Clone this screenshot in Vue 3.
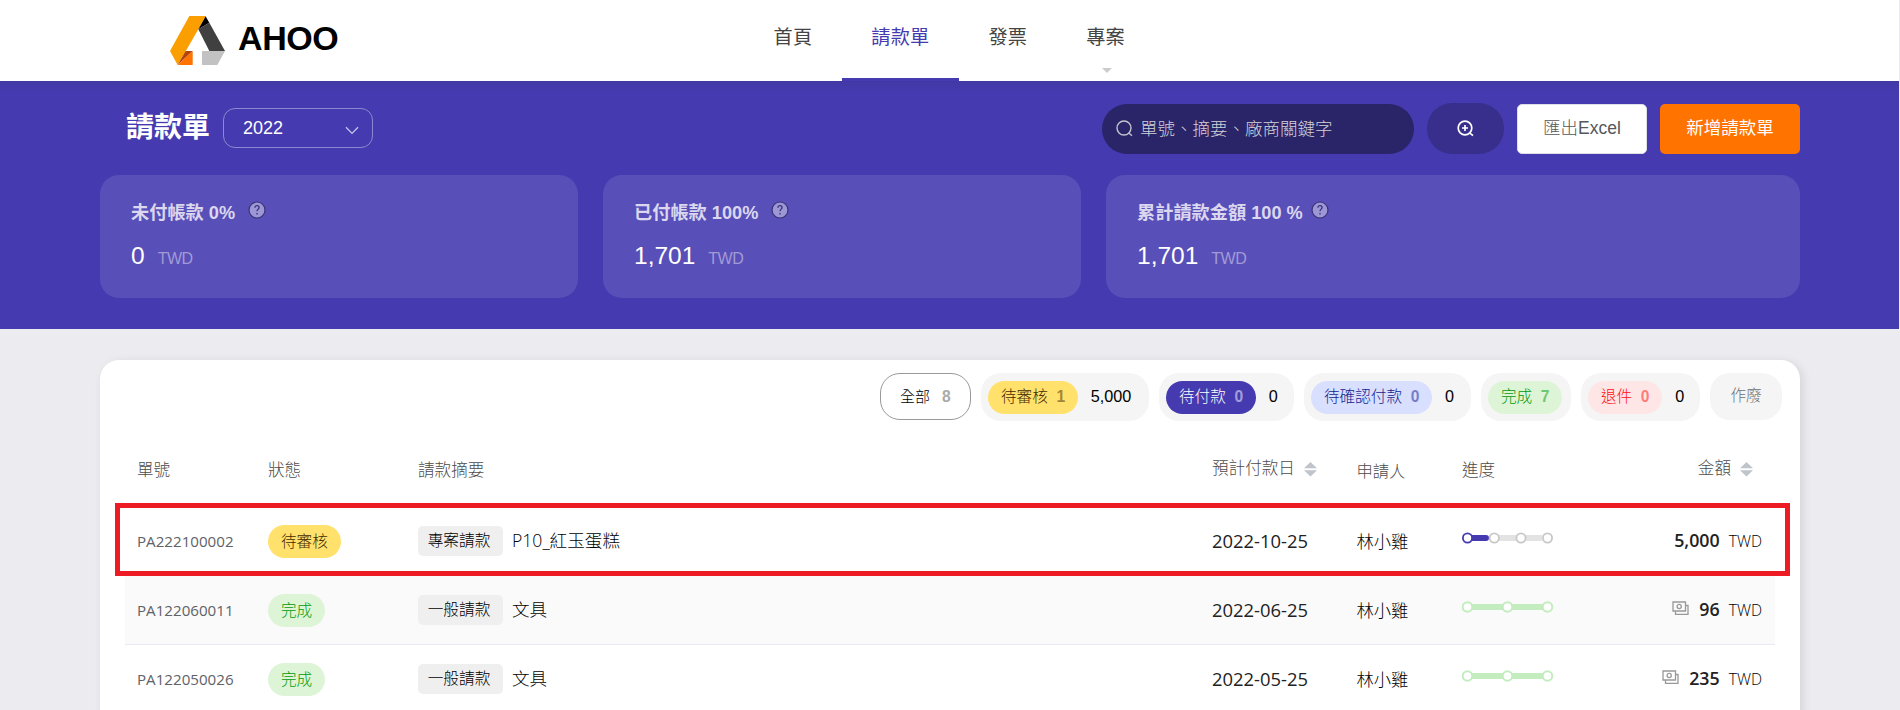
<script setup>
const nav = [
  { label: '首頁' },
  { label: '請款單', active: true },
  { label: '發票' },
  { label: '專案', menu: true },
]

const cards = [
  { title: '未付帳款 0%', value: '0', gap: 'wide' },
  { title: '已付帳款 100%', value: '1,701', gap: 'wide' },
  { title: '累計請款金額 100 %', value: '1,701', gap: 'narrow' },
]

const filters = [
  { kind: 'review', label: '待審核', count: 1, total: '5,000', w: 168 },
  { kind: 'topay', label: '待付款', count: 0, total: '0', w: 135 },
  { kind: 'confirm', label: '待確認付款', count: 0, total: '0', w: 167 },
  { kind: 'done', label: '完成', count: 7, w: 90 },
  { kind: 'reject', label: '退件', count: 0, total: '0', w: 119 },
]

const rows = [
  { id: 'PA222100002', kind: 'review', status: '待審核', type: '專案請款', desc: 'P10_紅玉蛋糕', date: '2022-10-25', who: '林小雞', amount: '5,000', paid: false },
  { id: 'PA122060011', kind: 'done', status: '完成', type: '一般請款', desc: '文具', date: '2022-06-25', who: '林小雞', amount: '96', paid: true },
  { id: 'PA122050026', kind: 'done', status: '完成', type: '一般請款', desc: '文具', date: '2022-05-25', who: '林小雞', amount: '235', paid: true },
]
</script>

<template>
  <div class="page">
    <header class="topbar">
      <div class="brand">
        <svg class="mark" viewBox="240 47 165 147">
          <polygon points="298,47 347,47 325,87 263,194 240,152" fill="#fb9e00" />
          <polygon points="347,48 358,67 325,87" fill="#000" />
          <polygon points="358,67 405,152 358,152 325,87" fill="#404040" />
          <polygon points="336,152 405,152 382,194 336,194" fill="#c2c2c2" />
          <polygon points="287,152 308,152 263,194" fill="#b3430a" />
          <polygon points="308,152 308,194 263,194" fill="#ff7300" />
        </svg>
        <span class="brand-name">AHOO</span>
      </div>
      <nav class="nav">
        <a v-for="n in nav" :key="n.label" class="nav-item" :class="{ active: n.active }">
          <span class="nav-label">{{ n.label }}</span>
          <i v-if="n.menu" class="caret"></i>
        </a>
      </nav>
    </header>

    <section class="hero">
      <div class="toolbar">
        <h1>請款單</h1>
        <div class="year">
          <span>2022</span>
          <svg width="14" height="9" viewBox="0 0 14 9"><path d="M1 1.2 7 7.4 13 1.2" fill="none" stroke="#c9c5e8" stroke-width="1.3" /></svg>
        </div>
        <div class="search">
          <svg width="17" height="17" viewBox="0 0 17 17" fill="none" stroke="#c4c4cc" stroke-width="1.4">
            <circle cx="8" cy="8" r="7" /><path d="M12.6 12.8 16 15.8" />
          </svg>
          <span>單號、摘要、廠商關鍵字</span>
        </div>
        <button class="advanced">
          <svg width="17" height="17" viewBox="0 0 17 17" fill="none" stroke="#fff" stroke-width="1.7">
            <circle cx="8" cy="8" r="6.8" /><path d="M12.6 12.8 16 15.6M8 5v6M5 8h6" />
          </svg>
        </button>
        <button class="btn export">匯出Excel</button>
        <button class="btn create">新增請款單</button>
      </div>
      <div class="cards">
        <div v-for="c in cards" :key="c.title" class="card">
          <div class="card-title" :class="c.gap">
            <span>{{ c.title }}</span>
            <svg width="18" height="18" viewBox="0 0 18 18">
              <circle cx="9" cy="9" r="8" fill="#9d97d6" stroke="#3a3277" stroke-width="1.2" />
              <path d="M6.9 6.7c0-1.3.9-2.1 2.1-2.1s2.1.8 2.1 1.9c0 1.6-2.1 1.7-2.1 3.7M9 11.9v1.5" fill="none" stroke="#3a3277" stroke-width="1.3" />
            </svg>
          </div>
          <div class="card-value">{{ c.value }}<small>TWD</small></div>
        </div>
      </div>
    </section>

    <main class="panel">
      <div class="filters">
        <div class="all"><span>全部</span><b>8</b></div>
        <div v-for="f in filters" :key="f.label" class="filter" :style="{ width: f.w + 'px' }">
          <span class="pill" :class="f.kind">{{ f.label }}<b>{{ f.count }}</b></span>
          <span v-if="f.total" class="total">{{ f.total }}</span>
        </div>
        <div class="void">作廢</div>
      </div>

      <div class="grid head">
        <span>單號</span>
        <span>狀態</span>
        <span>請款摘要</span>
        <span class="sortable">預計付款日<svg width="13" height="15" viewBox="0 0 13 15" fill="#c0c4cc"><path d="M6.5 0 13 6.300H0zM0 8.300h13L6.500 14.600z" /></svg></span>
        <span class="applicant">申請人</span>
        <span>進度</span>
        <span class="sortable last">金額<svg width="13" height="15" viewBox="0 0 13 15" fill="#c0c4cc"><path d="M6.500 0 13 6.300H0zM0 8.300h13L6.500 14.600z" /></svg></span>
      </div>

      <div v-for="(r, i) in rows" :key="r.id" class="grid row" :class="{ striped: i === 1 }">
        <span class="id">{{ r.id }}</span>
        <span><em class="tag" :class="r.kind">{{ r.status }}</em></span>
        <span class="summary"><em class="type">{{ r.type }}</em><span class="desc">{{ r.desc }}</span></span>
        <span class="date">{{ r.date }}</span>
        <span class="who">{{ r.who }}</span>
        <span class="progress">
          <svg v-if="r.kind === 'review'" width="92" height="12" viewBox="0 0 92 12">
            <path d="M32 6h48" stroke="#e3e3e3" stroke-width="6" />
            <path d="M6 6h18" stroke="#453ab0" stroke-width="6" stroke-linecap="round" />
            <circle cx="5.500" cy="6" r="4.600" fill="#fff" stroke="#453ab0" stroke-width="1.800" />
            <g fill="#fff" stroke="#c8c8c8" stroke-width="1.800">
              <circle cx="32.300" cy="6" r="4.600" /><circle cx="59" cy="6" r="4.600" /><circle cx="85.500" cy="6" r="4.600" />
            </g>
          </svg>
          <svg v-else width="92" height="12" viewBox="0 0 92 12">
            <path d="M6 6h76" stroke="#c3ecbf" stroke-width="6" />
            <g fill="#fff" stroke="#c3ecbf" stroke-width="2">
              <circle cx="5.500" cy="6" r="4.800" /><circle cx="45.500" cy="6" r="4.800" /><circle cx="85.500" cy="6" r="4.800" />
            </g>
          </svg>
        </span>
        <span class="money">
          <svg v-if="r.paid" width="17" height="15" viewBox="0 0 17 15" fill="none" stroke="#999" stroke-width="1.300">
            <path d="M1 1h12.500v9H1zM3.500 10.500V13.300H16V4.500h-2" /><circle cx="7.200" cy="5.500" r="2.100" />
          </svg>
          <strong>{{ r.amount }}</strong><small>TWD</small>
        </span>
      </div>

      <div class="highlight"></div>
    </main>
  </div>
</template>

<style>
body {
  background: #ecebf0;
  overflow: hidden;
}
</style>

<style scoped>
.page {
  width: 1900px;
  height: 710px;
  overflow: hidden;
  font-family: "Liberation Sans", "Noto Sans CJK TC", sans-serif;
  color: #000;
}
.page * {
  box-sizing: border-box;
}
.topbar {
  display: flex;
  height: 81px;
  margin-right: 1px;
  background: #fff;
}
.brand {
  display: flex;
  width: 743px;
  padding: 16px 0 0 170px;
}
.mark {
  width: 55px;
  height: 49px;
  flex: none;
}
.brand-name {
  margin: 2px 0 0 13px;
  font-size: 34px;
  line-height: 40px;
  font-weight: 700;
  letter-spacing: -0.4px;
}
.nav {
  display: flex;
  padding-left: 1px;
}
.nav-item {
  display: flex;
  flex-direction: column;
  align-items: center;
  padding: 23px 29.500px 0;
  height: 81px;
  font-size: 19.200px;
  line-height: 30px;
  letter-spacing: 0.200px;
  color: #444;
}
.nav-item.active {
  color: #453ab0;
  border-bottom: 3px solid #453ab0;
}
.caret {
  margin: 15px 0 0 2px;
  border: 5px solid transparent;
  border-top-color: #ccc;
  border-bottom: 0;
}
.hero {
  height: 248px;
  margin-right: 1px;
  padding: 22px 99px 0 100px;
  background: linear-gradient(#4238a4, #453ab0 10px);
}
.toolbar {
  display: flex;
  height: 52px;
  align-items: flex-start;
}
h1 {
  margin: 5px 13px 0 26px;
  width: 84px;
  font-size: 28px;
  line-height: 40px;
  color: #fff;
  white-space: nowrap;
}
.year {
  display: flex;
  width: 150px;
  height: 40px;
  margin-top: 5px;
  padding: 0 13px 0 19px;
  align-items: center;
  justify-content: space-between;
  border: 1px solid #8f88d0;
  border-radius: 12px;
  color: #fff;
  font-size: 18px;
}
.year svg {
  margin-top: 4px;
}
.search {
  display: flex;
  align-items: center;
  width: 312px;
  height: 50px;
  margin: 1px 13px 0 auto;
  padding-left: 14px;
  border-radius: 25px;
  background: #2a2468;
  color: #d2d1d8;
  font-size: 17.500px;
  font-weight: 300;
  white-space: nowrap;
}
.search svg {
  margin-top: -2px;
}
.search span {
  margin: -4px 0 0 7px;
}
button {
  border: 0;
  padding: 0;
  font-family: inherit;
}
.advanced {
  display: flex;
  align-items: center;
  justify-content: center;
  width: 77px;
  height: 51px;
  margin-right: 13px;
  border-radius: 25px;
  background: #382f8d;
}
.btn {
  height: 50px;
  margin-top: 1px;
  border-radius: 5px;
  font-size: 17.500px;
  line-height: 46px;
  padding-bottom: 3px;
}
.export {
  width: 130px;
  margin-right: 13px;
  border: 1px solid #dcdfe6;
  background: #fff;
  color: #55575b;
  font-weight: 300;
}
.create {
  width: 140px;
  background: #ff7300;
  color: #fff;
}
.cards {
  display: grid;
  grid-template-columns: 478px 478px 694px;
  gap: 25px;
  margin-top: 20px;
}
.card {
  height: 123px;
  padding: 22px 31px 0;
  border-radius: 19px;
  background: #594fb8;
}
.card-title {
  display: flex;
  height: 30px;
  font-size: 18.200px;
  line-height: 32px;
  font-weight: 700;
  color: #dad7ef;
}
.card-title svg {
  margin: 4px 0 0 13px;
}
.card-title.narrow svg {
  margin-left: 8px;
}
.card-value {
  margin-top: 13px;
  color: #fff;
  font-size: 24.500px;
  line-height: 32px;
}
.card-value small {
  margin-left: 13px;
  font-size: 16px;
  letter-spacing: -0.500px;
  color: #a19bd5;
}
.panel {
  position: relative;
  width: 1700px;
  height: 400px;
  margin: 31px 0 0 100px;
  border-radius: 19px;
  background: #fff;
  box-shadow: 3px 2px 10px rgba(0, 0, 0, 0.1);
}
.filters {
  display: flex;
  justify-content: flex-end;
  gap: 10px;
  height: 61px;
  padding: 13px 18px 0 0;
  font-size: 15.600px;
  font-weight: 300;
}
.all {
  display: flex;
  width: 91px;
  height: 47px;
  padding-left: 19px;
  gap: 12px;
  border: 1px solid #999;
  border-radius: 20px;
  line-height: 45px;
  font-size: 15px;
}
b {
  font-weight: 700;
}
.all b {
  color: #aaa;
  line-height: 46px;
  font-size: 15.600px;
}
.filter {
  display: flex;
  height: 48px;
  padding: 8px 0 0 7px;
  border-radius: 20px;
  background: #f5f5f5;
}
.pill {
  display: flex;
  gap: 8.500px;
  height: 33px;
  padding: 0 12.500px 0 13px;
  border-radius: 17px;
  line-height: 31px;
}
.pill b {
  width: 9px;
  line-height: 32px;
  opacity: 0.5;
  text-align: center;
}
.total {
  margin-left: 13px;
  font-size: 16.200px;
  line-height: 31px;
}
.review {
  background: #ffe16b;
  color: #472b00;
}
.topay {
  background: #453ab0;
  color: #fff;
}
.confirm {
  background: #d9dfff;
  color: #141e8c;
}
.done {
  background: #ddf5d6;
  color: #009a0c;
}
.reject {
  background: #ffe6e6;
  color: #ff0f0f;
}
.void {
  width: 72px;
  height: 47px;
  border-radius: 20px;
  background: #f5f5f5;
  color: #707070;
  line-height: 46px;
  text-align: center;
}
.grid {
  display: grid;
  grid-template-columns: 131px 150px 794px 144.500px 105.500px 90px 1fr;
  align-items: center;
  margin: 0 25px;
  padding: 0 12px;
  font-family: "Open Sans", "Noto Sans CJK TC", sans-serif;
}
.head {
  height: 86px;
  padding-top: 13px;
  font-size: 16.600px;
  font-weight: 300;
  line-height: 24px;
  color: #4c4c4c;
  font-family: "Liberation Sans", "Noto Sans CJK TC", sans-serif;
}
.sortable {
  display: flex;
  align-items: center;
  gap: 9px;
  padding-bottom: 3px;
}
.applicant {
  font-size: 16.300px;
}
.sortable.last {
  justify-content: flex-end;
  padding-right: 10px;
}
.row {
  height: 69px;
  border-bottom: 1px solid #ebeaf2;
}
.striped {
  background: #fafafa;
}
.id {
  font-size: 15.150px;
  color: #606266;
  padding-bottom: 1px;
}
em {
  font-style: normal;
}
.tag {
  display: inline-block;
  height: 33px;
  padding: 0 13px;
  border-radius: 17px;
  font-size: 15.600px;
  font-weight: 300;
  line-height: 33px;
  vertical-align: middle;
}
.summary {
  display: flex;
  align-items: center;
}
.type {
  width: 85px;
  height: 30px;
  padding-right: 3px;
  border-radius: 5px;
  background: #efefef;
  color: #000;
  font-size: 15.700px;
  font-weight: 300;
  line-height: 29px;
  text-align: center;
}
.desc {
  margin: -4px 0 0 9px;
  font-size: 17.600px;
  font-weight: 300;
}
.date {
  font-size: 18.400px;
  color: #222;
  padding-bottom: 2px;
}
.who {
  font-size: 17.300px;
  font-weight: 300;
  color: #000;
  padding-bottom: 2px;
}
.progress {
  display: flex;
  padding-bottom: 7px;
}
.progress svg {
  flex: none;
}
.money {
  display: flex;
  align-items: center;
  justify-content: flex-end;
  padding: 0 1px 3px 0;
  color: #222;
}
.money svg {
  margin-right: 10px;
}
.money strong {
  font-size: 17.800px;
  font-weight: 600;
}
.money small {
  margin: 2px 0 0 9px;
  font-size: 15.700px;
  font-weight: 300;
  color: #000;
}
.highlight {
  position: absolute;
  left: 15px;
  top: 143px;
  width: 1675px;
  height: 73px;
  border: 5px solid #ed1c24;
}
</style>
